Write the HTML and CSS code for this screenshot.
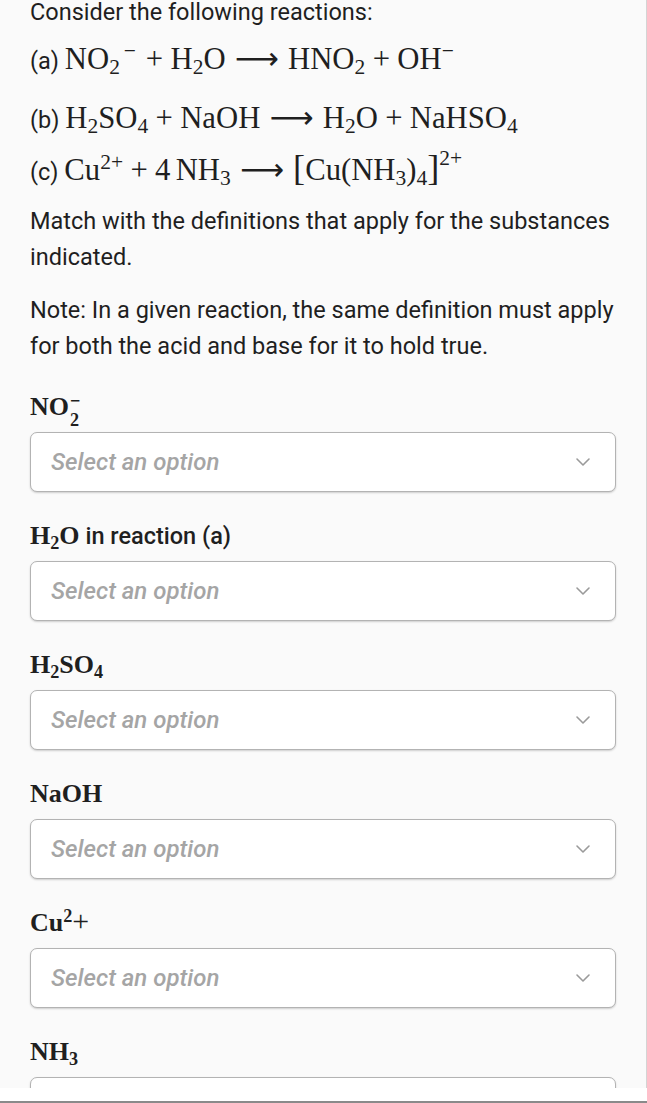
FILE: index.html
```html
<!DOCTYPE html>
<html lang="en">
<head>
<meta charset="utf-8">
<title>Acid-base definitions</title>
<link rel="stylesheet" href="styles.css">
</head>
<body>
<div class="page">
  <main class="content">
    <p class="para first">Consider the following reactions:</p>
    <p class="para rxn rxn-a">(a) <span class="m">NO<sub>2</sub><sup class="late">−</sup><span class="bin">+</span>H<sub>2</sub>O<span class="rel">⟶</span>HNO<sub>2</sub><span class="bin">+</span>OH<sup>−</sup></span></p>
    <p class="para rxn rxn-b">(b) <span class="m">H<sub>2</sub>SO<sub>4</sub><span class="bin">+</span>NaOH<span class="rel">⟶</span>H<sub>2</sub>O<span class="bin">+</span>NaHSO<sub>4</sub></span></p>
    <p class="para rxn rxn-c">(c) <span class="m">Cu<sup>2+</sup><span class="bin">+</span>4<span class="thin"></span>NH<sub>3</sub><span class="rel">⟶</span><span class="br">[</span>Cu(NH<sub>3</sub>)<sub>4</sub><span class="br">]</span><sup class="hi">2+</sup></span></p>
    <p class="para">Match with the definitions that apply for the substances indicated.</p>
    <p class="para note">Note: In a given reaction, the same definition must apply for both the acid and base for it to hold true.</p>

    <div class="fields">
      <div class="field">
        <div class="label"><span class="mb">NO<span class="stack"><span>−</span><span>2</span></span></span></div>
        <div class="select"><span class="placeholder">Select an option</span><svg class="chev" width="16" height="10" viewBox="0 0 16 10"><polyline points="2,2 8,8 14,2"/></svg></div>
      </div>
      <div class="field">
        <div class="label"><span class="mb">H<sub>2</sub>O</span> in reaction (a)</div>
        <div class="select"><span class="placeholder">Select an option</span><svg class="chev" width="16" height="10" viewBox="0 0 16 10"><polyline points="2,2 8,8 14,2"/></svg></div>
      </div>
      <div class="field">
        <div class="label"><span class="mb">H<sub>2</sub>SO<sub>4</sub></span></div>
        <div class="select"><span class="placeholder">Select an option</span><svg class="chev" width="16" height="10" viewBox="0 0 16 10"><polyline points="2,2 8,8 14,2"/></svg></div>
      </div>
      <div class="field">
        <div class="label"><span class="mb">NaOH</span></div>
        <div class="select"><span class="placeholder">Select an option</span><svg class="chev" width="16" height="10" viewBox="0 0 16 10"><polyline points="2,2 8,8 14,2"/></svg></div>
      </div>
      <div class="field">
        <div class="label"><span class="mb">Cu<sup>2</sup><span class="plus">+</span></span></div>
        <div class="select"><span class="placeholder">Select an option</span><svg class="chev" width="16" height="10" viewBox="0 0 16 10"><polyline points="2,2 8,8 14,2"/></svg></div>
      </div>
      <div class="field">
        <div class="label"><span class="mb">NH<sub>3</sub></span></div>
        <div class="select"><span class="placeholder">Select an option</span><svg class="chev" width="16" height="10" viewBox="0 0 16 10"><polyline points="2,2 8,8 14,2"/></svg></div>
      </div>
    </div>
  </main>
  <footer class="bar"></footer>
</div>
</body>
</html>
```

FILE: styles.css
```css
* { box-sizing: border-box; }
html, body { margin: 0; padding: 0; background: #fafafa; }
body {
  font-family: Roboto, "Liberation Sans", sans-serif;
  font-size: 23.5px;
  line-height: 36px;
  color: #1f1f1f;
}
.page {
  width: 647px;
  height: 1103px;
  display: flex;
  flex-direction: column;
  overflow: hidden;
}
.content {
  height: 1088px;
  flex: none;
  overflow: hidden;
  padding: 0 22px 0 30px;
  border-right: 1px solid #d4d4d4;
}
.bar {
  height: 15px;
  flex: none;
  background: #ffffff;
  border-bottom: 2px solid #8a8a8a;
}
.para { margin: 0 0 17px; }
.first { margin-top: 0; margin-bottom: 19px; line-height: 24px; }
.rxn { height: 36px; white-space: nowrap; }
.rxn-a { margin-bottom: 23px; }
.rxn-b { margin-bottom: 16px; }
.rxn-c { margin-bottom: 13px; }
.note { margin-bottom: 25px; }

.m {
  font-family: "Liberation Serif", "DejaVu Serif", serif;
  font-size: 30.7px;
  line-height: 1;
}
.m sub, .m sup { font-size: 0.7em; line-height: 0; }
.m sub { vertical-align: -0.22em; }
.m sup { vertical-align: 0.5em; }
.m sup.late { margin-left: 0.18em; margin-right: 0.12em; }
.m sup.hi { vertical-align: 0.68em; }
.bin { margin: 0 0.24em; }
.rel { margin: 0 0.3em; font-family: "DejaVu Sans", sans-serif; }
.thin { display: inline-block; width: 0.17em; }
.br { font-size: 1.18em; line-height: 0; }

.fields { margin-right: 8px; }
.field + .field { margin-top: 26px; }
.label {
  height: 36px;
  font-weight: 500;
  line-height: 36px;
  margin-bottom: 7px;
  white-space: nowrap;
}
.mb {
  font-family: "Liberation Serif", "DejaVu Serif", serif;
  font-weight: 700;
  font-size: 26px;
  line-height: 1;
}
.mb sub, .mb sup { font-size: 0.7em; line-height: 0; }
.mb sub { vertical-align: -0.25em; }
.mb sup { vertical-align: 0.5em; }
.mb .plus { font-weight: 400; font-size: 1.15em; }
.stack {
  display: inline-flex;
  flex-direction: column;
  font-size: 0.7em;
  line-height: 1;
  vertical-align: 0.42em;
  margin-left: 1px;
}
.select {
  height: 60px;
  background: #ffffff;
  border: 1px solid #b3b3b3;
  border-radius: 7px;
  box-shadow: 0 1px 2px rgba(0, 0, 0, 0.18);
  display: flex;
  align-items: center;
  justify-content: space-between;
  padding: 0 24px 0 20px;
}
.placeholder {
  font-size: 24px;
  font-style: italic;
  font-weight: 500;
  color: #a5a5a5;
}
.chev { fill: none; stroke: #9a9a9a; stroke-width: 1.6; stroke-linecap: round; stroke-linejoin: round; }
```
